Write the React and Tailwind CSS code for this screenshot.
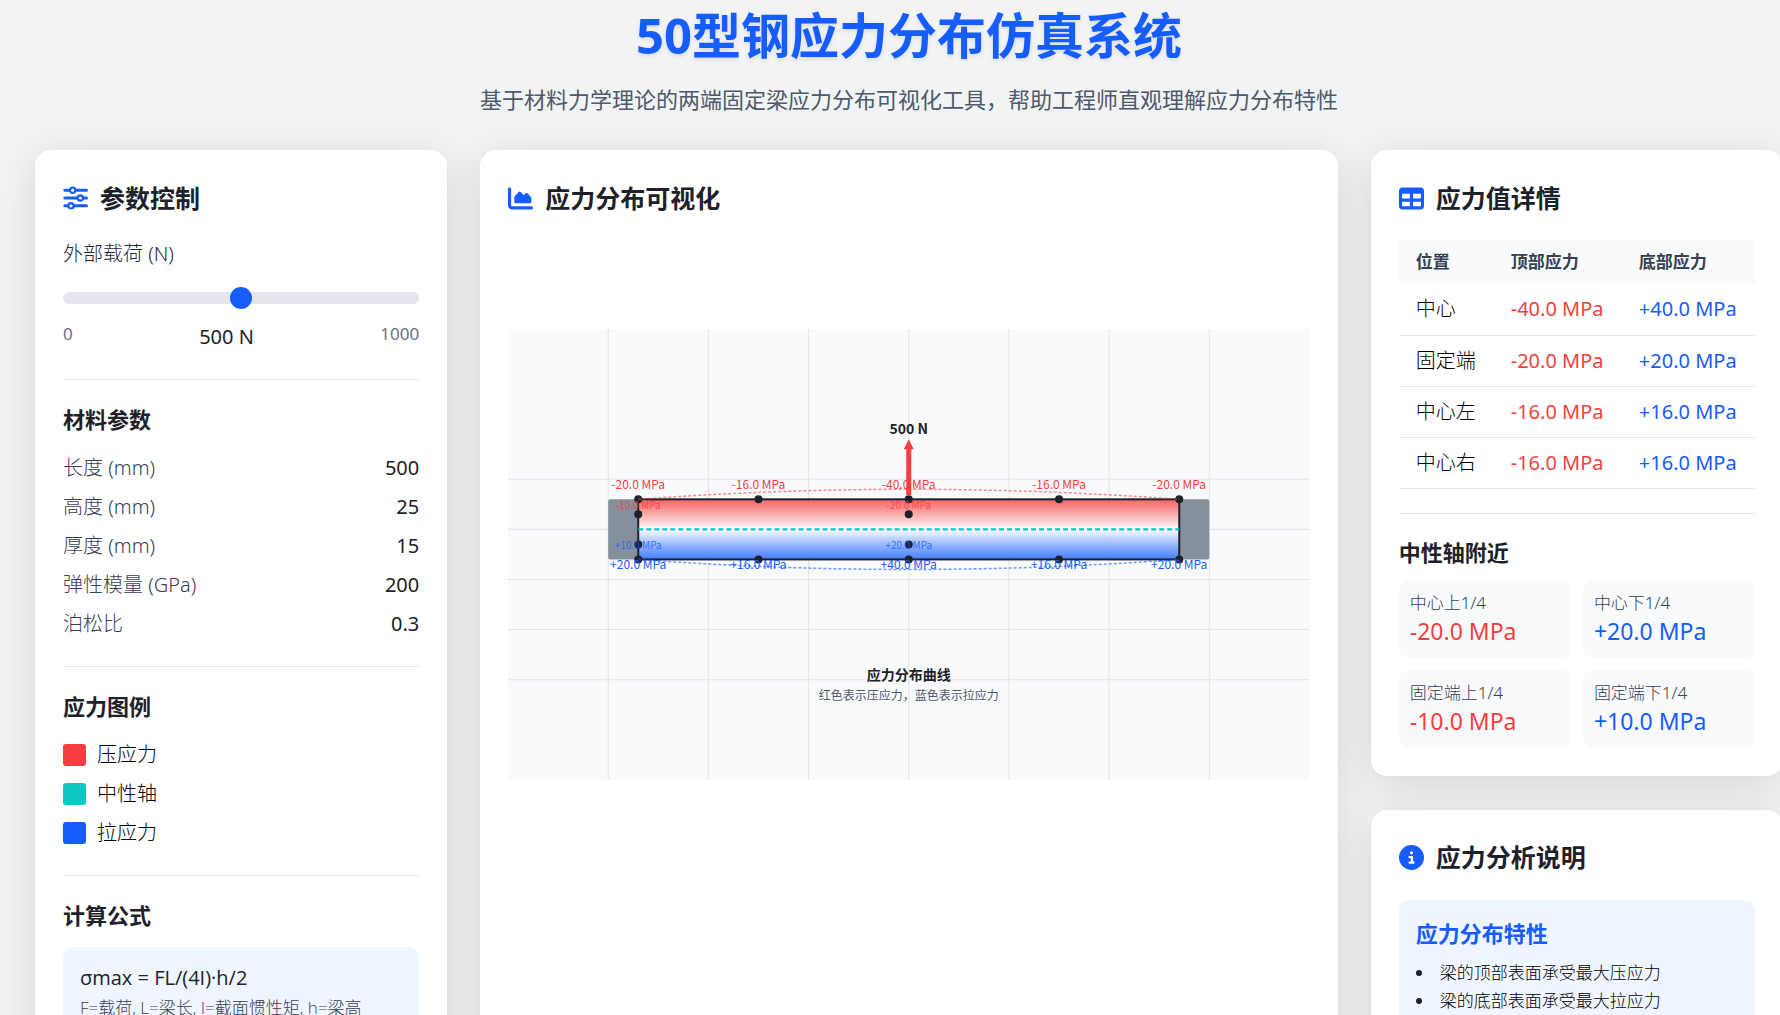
import React, { useState } from 'react';
import { FaChartArea, FaCircleInfo, FaTable } from 'react-icons/fa6';

const materials = [
    { id: 'length', label: '长度 (mm)', value: '500' },
    { id: 'height', label: '高度 (mm)', value: '25' },
    { id: 'thickness', label: '厚度 (mm)', value: '15' },
    { id: 'modulus', label: '弹性模量 (GPa)', value: '200' },
    { id: 'poisson', label: '泊松比', value: '0.3' },
];

const legend = [
    { label: '压应力', color: 'bg-[#f53f3f]' },
    { label: '中性轴', color: 'bg-[#0fc6c2]' },
    { label: '拉应力', color: 'bg-[#165dff]' },
];

const notes = ['梁的顶部表面承受最大压应力', '梁的底部表面承受最大拉应力'];

const fmt = (n) => `${n.toFixed(1)} MPa`;

const SlidersIcon = () => (
    <svg viewBox="0 0 25 24" className="h-6 w-[25px] text-[#165dff]" fill="none" stroke="currentColor" strokeWidth="3" strokeLinecap="round">
        <path d="M1.8 4.2H6M13 4.2h10.5M1.8 12H14M20.5 12h3M1.8 19.8H4.6M11.4 19.8h12.1" />
        <circle cx="9.7" cy="4.2" r="2.7" strokeWidth="2.2" />
        <circle cx="17.3" cy="12" r="2.7" strokeWidth="2.2" />
        <circle cx="8" cy="19.8" r="2.7" strokeWidth="2.2" />
    </svg>
);

const Card = ({ icon, title, children }) => (
    <section className="rounded-2xl bg-white p-7 shadow-[0_8px_42px_rgba(0,0,0,0.12)]">
        <h2 className="mb-[22px] flex h-10 items-center gap-3 text-[25px] font-bold">
            {icon}
            {title}
        </h2>
        {children}
    </section>
);

const Section = ({ title, className = 'mt-7', children }) => (
    <div className={`border-t border-[#e5e6eb] pt-[21px] ${className}`}>
        <h3 className="flex h-9 items-center text-[22px] font-bold">{title}</h3>
        {children}
    </div>
);

const Label = ({ x, y, size = 12, fill, children }) => (
    <text x={x} y={y} fontSize={size} fill={fill} textAnchor="middle">{children}</text>
);

const BeamChart = ({ load }) => {
    const k = load / 500;
    const points = [
        { x: 130, v: 20 },
        { x: 250, v: 16 },
        { x: 400, v: 40 },
        { x: 550, v: 16 },
        { x: 670, v: 20 },
    ];
    const quarters = [
        { x: 130, v: 10 },
        { x: 400, v: 20 },
    ];

    return (
        <svg viewBox="0 0 800 450" className="w-full font-['Noto_Sans_CJK_SC',sans-serif]">
            <defs>
                <linearGradient id="stress" x1="0" y1="0" x2="0" y2="1">
                    <stop offset="0%" stopColor="#f53f3f" stopOpacity="0.8" />
                    <stop offset="50%" stopColor="#ffffff" stopOpacity="0.9" />
                    <stop offset="100%" stopColor="#165dff" stopOpacity="0.8" />
                </linearGradient>
            </defs>
            <rect width="800" height="450" fill="#f9fafc" />

            {/* Grid */}
            <g stroke="#e2e4e6" strokeWidth="1">
                {[100, 200, 300, 400, 500, 600, 700].map((x) => (
                    <line key={x} x1={x} y1="0" x2={x} y2="450" />
                ))}
                {[150, 200, 250, 300, 350].map((y) => (
                    <line key={y} x1="0" y1={y} x2="800" y2={y} />
                ))}
            </g>

            {/* Supports and beam */}
            <rect x="100" y="170" width="30" height="60" rx="2" fill="#86909c" />
            <rect x="670" y="170" width="30" height="60" rx="2" fill="#86909c" />
            <rect x="130" y="170" width="540" height="60" fill="url(#stress)" stroke="#1d2129" strokeWidth="2" />
            <line x1="130" y1="200" x2="670" y2="200" stroke="#0fc6c2" strokeWidth="2" strokeDasharray="5,3" />

            {points.map((p) => (
                <g key={p.x} fill="#1d2129">
                    <circle cx={p.x} cy="170" r="4" />
                    <circle cx={p.x} cy="230" r="4" />
                </g>
            ))}
            {quarters.map((p) => (
                <g key={p.x} fill="#1d2129">
                    <circle cx={p.x} cy="185" r="4" />
                    <circle cx={p.x} cy="215" r="4" />
                </g>
            ))}
            {points.map((p) => (
                <g key={p.x}>
                    <Label x={p.x} y={160} fill="#f53f3f">-{fmt(p.v * k)}</Label>
                    <Label x={p.x} y={240} fill="#165dff">+{fmt(p.v * k)}</Label>
                </g>
            ))}
            {quarters.map((p) => (
                <g key={p.x} opacity="0.8">
                    <Label x={p.x} y={180} size={10} fill="#f53f3f">-{fmt(p.v * k)}</Label>
                    <Label x={p.x} y={220} size={10} fill="#165dff">+{fmt(p.v * k)}</Label>
                </g>
            ))}

            {/* Load arrow */}
            <line x1="400" y1="166" x2="400" y2="118" stroke="#f53f3f" strokeWidth="5" />
            <path d="M395 120l5-10 5 10z" fill="#f53f3f" />
            <text x="400" y="105" fontSize="14" fontWeight="700" fill="#1d2129" textAnchor="middle">{load} N</text>

            {/* Stress curves */}
            <g fill="none" strokeWidth="1.5" strokeDasharray="3,2" opacity="0.6">
                <path d="M130 170Q400 150 670 170" stroke="#f53f3f" />
                <path d="M130 230Q400 250 670 230" stroke="#165dff" />
            </g>

            <text x="400" y="350" fontSize="14" fontWeight="700" fill="#1d2129" textAnchor="middle">应力分布曲线</text>
            <Label x={400} y={370} fill="#4e5969">红色表示压应力，蓝色表示拉应力</Label>
        </svg>
    );
};

export default function App() {
    const [load, setLoad] = useState(500);
    const k = load / 500;

    const rows = [
        { name: '中心', v: 40 * k },
        { name: '固定端', v: 20 * k },
        { name: '中心左', v: 16 * k },
        { name: '中心右', v: 16 * k },
    ];
    const quarterCards = [
        { name: '中心上1/4', text: `-${fmt(20 * k)}`, color: 'text-[#f53f3f]' },
        { name: '中心下1/4', text: `+${fmt(20 * k)}`, color: 'text-[#165dff]' },
        { name: '固定端上1/4', text: `-${fmt(10 * k)}`, color: 'text-[#f53f3f]' },
        { name: '固定端下1/4', text: `+${fmt(10 * k)}`, color: 'text-[#165dff]' },
    ];

    return (
        <div className="h-screen overflow-hidden bg-[#f1f3f5] font-['Noto_Sans','Noto_Sans_CJK_SC',sans-serif] text-xl text-[#1d2129]">
            <div className="-mr-[3px] ml-[35px]">
                <header className="mb-[34px] text-center">
                    <h1 className="pt-[2px] text-[49px] leading-[66px] font-bold text-[#165dff] [text-shadow:0_2px_4px_rgba(0,0,0,0.1)]">50型钢应力分布仿真系统</h1>
                    <p className="mt-[14px] text-[22px] leading-[34px] text-[#4e5969]">基于材料力学理论的两端固定梁应力分布可视化工具，帮助工程师直观理解应力分布特性</p>
                </header>

                <main className="grid grid-cols-4 gap-[33px]">
                    <Card icon={<SlidersIcon />} title="参数控制">
                        <label htmlFor="load" className="block h-7 leading-7 font-light text-gray-800">外部载荷 (N)</label>
                        <input
                            id="load"
                            type="range"
                            min="0"
                            max="1000"
                            value={load}
                            onChange={(e) => setLoad(Number(e.target.value))}
                            className="mt-6 block h-3 w-full appearance-none rounded-full bg-[#e5e6eb] [&::-webkit-slider-thumb]:size-[22px] [&::-webkit-slider-thumb]:appearance-none [&::-webkit-slider-thumb]:rounded-full [&::-webkit-slider-thumb]:bg-[#165dff]"
                        />
                        <div className="mt-4 flex justify-between text-[17px] leading-7 text-gray-500">
                            <span>0</span>
                            <span className="pt-[3px] text-xl leading-7 text-[#1d2129]">{load} N</span>
                            <span>1000</span>
                        </div>

                        <Section title="材料参数">
                            <dl className="mt-[17px] space-y-[11px]">
                                {materials.map((m) => (
                                    <div key={m.id} className="flex justify-between leading-7">
                                        <dt className="font-light text-gray-700">{m.label}</dt>
                                        <dd>{m.value}</dd>
                                    </div>
                                ))}
                            </dl>
                        </Section>

                        <Section title="应力图例">
                            <ul className="mt-[17px] space-y-[11px]">
                                {legend.map((item) => (
                                    <li key={item.label} className="flex items-center gap-[11px] leading-7 font-light text-black">
                                        <span className={`h-[22px] w-[23px] rounded-[3px] ${item.color}`} />
                                        {item.label}
                                    </li>
                                ))}
                            </ul>
                        </Section>

                        <Section title="计算公式">
                            <div className="mt-[14px] rounded-[11px] bg-[#eff6ff] p-[17px] font-['Open_Sans','Noto_Sans_CJK_SC',sans-serif] leading-7">
                                <p>σmax = FL/(4I)·h/2</p>
                                <p className="text-[17px] leading-8 font-light text-gray-700">F=载荷, L=梁长, I=截面惯性矩, h=梁高</p>
                            </div>
                        </Section>
                    </Card>

                    <div className="col-span-2 grid">
                        <Card icon={<FaChartArea className="text-[#165dff]" />} title="应力分布可视化">
                            <div className="mt-[111px]">
                                <BeamChart load={load} />
                            </div>
                        </Card>
                    </div>

                    <div className="space-y-[34px]">
                        <Card icon={<FaTable className="text-[#165dff]" />} title="应力值详情">
                            <table className="w-full text-left whitespace-nowrap">
                                <thead className="bg-[#f9fafc] text-[17px] text-gray-700">
                                    <tr className="h-11">
                                        <th className="px-[17px] font-bold">位置</th>
                                        <th className="px-[17px] font-bold">顶部应力</th>
                                        <th className="px-[17px] font-bold">底部应力</th>
                                    </tr>
                                </thead>
                                <tbody>
                                    {rows.map((r) => (
                                        <tr key={r.name} className="h-[51px] border-b border-[#e5e6eb]">
                                            <td className="px-[17px] font-light text-black">{r.name}</td>
                                            <td className="px-[17px] text-[#f53f3f]">-{fmt(r.v)}</td>
                                            <td className="px-[17px] text-[#165dff]">+{fmt(r.v)}</td>
                                        </tr>
                                    ))}
                                </tbody>
                            </table>

                            <Section title="中性轴附近" className="mt-6">
                                <div className="mt-[9px] grid grid-cols-2 gap-3">
                                    {quarterCards.map((q) => (
                                        <div key={q.name} className="rounded-[11px] bg-[#f9fafc] p-[11px]">
                                            <p className="text-[17px] leading-6 font-light text-gray-700">{q.name}</p>
                                            <p className={`text-[23px] leading-8 ${q.color}`}>{q.text}</p>
                                        </div>
                                    ))}
                                </div>
                            </Section>
                        </Card>

                        <Card icon={<FaCircleInfo className="text-[#165dff]" />} title="应力分析说明">
                            <div className="rounded-[11px] bg-[#eff6ff] p-[17px]">
                                <h3 className="text-[22px] leading-8 font-bold text-[#165dff]">应力分布特性</h3>
                                <ul className="mt-[10px] text-[17px] leading-7 font-light text-black">
                                    {notes.map((n) => (
                                        <li key={n} className="flex items-center gap-[18px]">
                                            <span className="size-[6px] rounded-full bg-[#1d2129]" />
                                            {n}
                                        </li>
                                    ))}
                                </ul>
                            </div>
                        </Card>
                    </div>
                </main>
            </div>
        </div>
    );
}
